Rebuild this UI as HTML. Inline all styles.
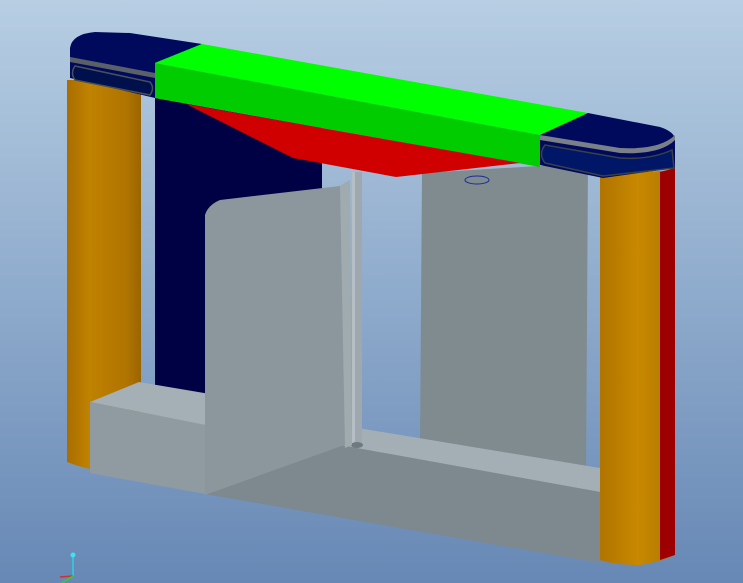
<!DOCTYPE html>
<html><head><meta charset="utf-8"><style>
html,body{margin:0;padding:0;width:743px;height:583px;overflow:hidden}
svg{display:block}
</style></head><body>
<svg width="743" height="583" viewBox="0 0 743 583" xmlns="http://www.w3.org/2000/svg">
<defs>
<linearGradient id="bg" x1="0" y1="0" x2="0" y2="1">
<stop offset="0" stop-color="#b7cee3"/><stop offset="1" stop-color="#6788b5"/></linearGradient>
<linearGradient id="or" x1="0" y1="0" x2="1" y2="0">
<stop offset="0" stop-color="#a86e00"/><stop offset="0.3" stop-color="#c08200"/><stop offset="0.8" stop-color="#b07400"/><stop offset="1" stop-color="#9a6600"/></linearGradient>
<linearGradient id="or2" x1="0" y1="0" x2="1" y2="0">
<stop offset="0" stop-color="#b07400"/><stop offset="0.5" stop-color="#c88800"/><stop offset="1" stop-color="#b07800"/></linearGradient>
</defs>
<rect width="743" height="583" fill="url(#bg)"/>
<!-- navy back panel -->
<polygon points="155,98 322,128 322,405 155,402" fill="#000044"/>
<!-- right panel -->
<polygon points="422,173 588,163 586,474 420,446" fill="#7f8b8f"/>
<ellipse cx="477" cy="180" rx="12" ry="4" fill="none" stroke="#1a2a9a" stroke-width="1"/>
<!-- left pillar -->
<path d="M67,80 L141,80 L141,473 Q100,475 67,462 Z" fill="url(#or)"/>
<!-- right pillar -->
<path d="M600,175 L675,170 L675,555 Q660,562 640,565 Q615,565 600,560 Z" fill="url(#or2)"/>
<polygon points="660,172 675,168 675,555 660,560" fill="#9c0000"/>
<!-- left base -->
<polygon points="90,402 139,382 210,394 205,425" fill="#a4afb6"/>
<polygon points="90,402 205,425 205,494 90,473" fill="#8f9ba1"/>
<!-- right base -->
<polygon points="329,443 358,428 600,468 600,492" fill="#a3aeb5"/>
<polygon points="205,494 329,443 600,492 600,563" fill="#7d898e"/>
<!-- rod -->
<rect x="352" y="172" width="10" height="274" fill="#9ea8ae"/>
<rect x="352" y="172" width="3" height="274" fill="#b4bec4"/>
<ellipse cx="357" cy="445" rx="6" ry="3" fill="#6f7a80"/>
<!-- door -->
<path d="M205,215 Q208,205 220,200 L340,186 L350,180 L350,443 L205,495 Z" fill="#8b979d"/>
<polygon points="340,186 350,180 352,445 345,448" fill="#a0abb0"/>
<!-- left cap -->
<path d="M70,48 Q72,34 95,32 L130,33 L202,44 L155,63 L155,98 L70,78 Z" fill="#000a5c"/>
<path d="M70,57 L155,73 L155,78 L70,62 Z" fill="#5a6068"/>
<path d="M75,66 L150,82 Q155,88 150,95 L75,80 Q70,73 75,66 Z" fill="#00104d" stroke="#4a5058" stroke-width="1.5"/>
<!-- green beam -->
<polygon points="155,63 202,44 588,113 540,135" fill="#00ff00"/>
<polygon points="155,63 540,135 540,167 155,98" fill="#00cc00"/>
<!-- red -->
<polygon points="186,104 293,158 396,177 520,163" fill="#d00000"/>
<!-- right cap -->
<path d="M540,135 L588,113 L660,127 Q675,132 675,140 L675,168 L603,178 L540,165 Z" fill="#000a5c"/>
<path d="M540,135 L620,148 Q660,150 675,135 L675,140 Q660,155 620,153 L540,140 Z" fill="#7a8088"/>
<path d="M545,145 L620,158 Q650,160 672,150 L674,168 L603,176 L545,163 Q538,154 545,145 Z" fill="#001666" stroke="#3a4048" stroke-width="1.5"/>
<!-- axis icon -->
<line x1="73" y1="556" x2="73" y2="576" stroke="#30d0e0" stroke-width="1.5"/>
<circle cx="73" cy="555" r="2.5" fill="#40e0f0"/>
<line x1="60" y1="577" x2="73" y2="576" stroke="#d03030" stroke-width="1.5"/>
<line x1="62" y1="583" x2="73" y2="576" stroke="#30d030" stroke-width="1.5"/>
</svg>
</body></html>
